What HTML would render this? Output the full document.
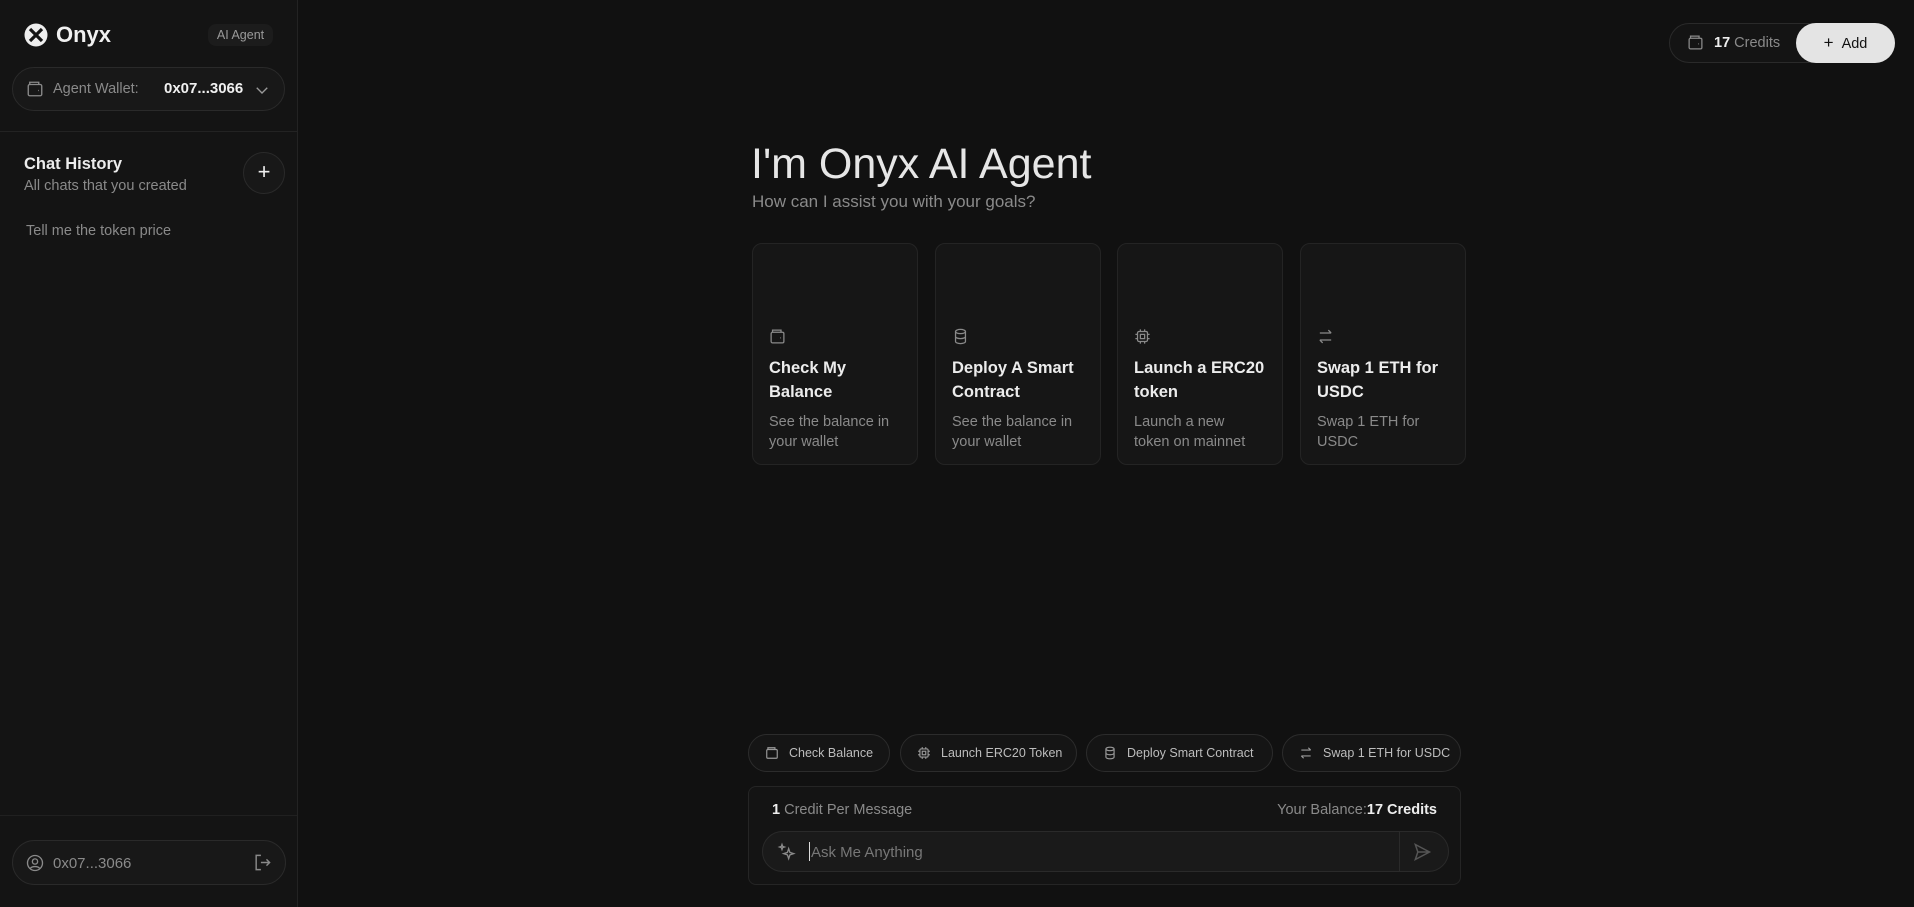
<!DOCTYPE html>
<html><head><meta charset="utf-8"><style>
*{box-sizing:border-box;margin:0;padding:0}
body{width:1914px;height:907px;background:#111111;font-family:"Liberation Sans",sans-serif;color:#e6e6e6;position:relative;overflow:hidden}
.abs{position:absolute}
.side{left:0;top:0;width:298px;height:907px;background:#141414;border-right:1px solid #232323}
.pill{border:1px solid #2a2a2a;border-radius:999px;background:#181818}
svg{display:block}
.card{position:absolute;top:243px;width:166px;height:222px;border:1px solid #242424;border-radius:10px;background:rgba(24,24,24,.85)}
.card svg{position:absolute;left:16px;top:84px}
.card .t{position:absolute;left:16px;top:112px;font-size:16.5px;font-weight:bold;line-height:24px;color:#ececec;width:140px}
.card .d{position:absolute;left:16px;top:168px;font-size:14.5px;line-height:20px;color:#8a8a8a;width:128px}
.chip{position:absolute;top:734px;height:38px;border:1px solid #2c2c2c;border-radius:999px;background:#151515;font-size:12.5px;color:#bdbdbd;display:flex;align-items:center;padding-left:16px;gap:10px;white-space:nowrap;overflow:hidden}
</style></head><body>
<div class="abs side">
  <svg class="abs" style="left:24px;top:23px" width="24" height="24" viewBox="0 0 24 24"><circle cx="12" cy="12" r="11.5" fill="#eee"/><path d="M6 6 L18 18 M18 6 L6 18" stroke="#141414" stroke-width="3.2"/></svg>
  <div class="abs" style="left:56px;top:22px;font-size:22px;font-weight:bold;color:#f0f0f0">Onyx</div>
  <div class="abs" style="left:208px;top:24px;width:65px;height:22px;border-radius:8px;background:#1c1c1c;font-size:12.5px;color:#9a9a9a;text-align:center;line-height:22px">AI Agent</div>
  <div class="abs pill" style="left:12px;top:67px;width:273px;height:44px"></div>
  <svg class="abs" style="left:26px;top:80px" width="18" height="18" viewBox="0 0 24 24" fill="none" stroke="#8a8a8a" stroke-width="1.8"><rect x="3" y="6" width="18" height="15" rx="2"/><path d="M5 6 L5 3 H17 V6 M16 14h1"/></svg>
  <div class="abs" style="left:53px;top:81px;font-size:14.5px;color:#8a8a8a">Agent Wallet:</div>
  <div class="abs" style="left:164px;top:80px;font-size:15px;font-weight:bold;color:#f0f0f0">0x07...3066</div>
  <svg class="abs" style="left:253px;top:81px" width="18" height="18" viewBox="0 0 24 24" fill="none" stroke="#9a9a9a" stroke-width="1.8"><path d="M5 9l7 7 7-7"/></svg>
  <div class="abs" style="left:0;top:131px;width:297px;height:1px;background:#232323"></div>
  <div class="abs" style="left:24px;top:155px;font-size:16.5px;font-weight:bold;color:#ececec">Chat History</div>
  <div class="abs" style="left:24px;top:178px;font-size:14.5px;color:#8a8a8a">All chats that you created</div>
  <div class="abs" style="left:243px;top:152px;width:42px;height:42px;border-radius:50%;border:1px solid #2a2a2a;background:#181818"></div>
  <div class="abs" style="left:243px;top:152px;width:42px;height:42px;text-align:center;line-height:40px;font-size:22px;color:#eee">+</div>
  <div class="abs" style="left:26px;top:223px;font-size:14.5px;color:#8a8a8a">Tell me the token price</div>
  <div class="abs" style="left:0;top:815px;width:297px;height:1px;background:#202020"></div>
  <div class="abs pill" style="left:12px;top:840px;width:274px;height:45px"></div>
  <svg class="abs" style="left:26px;top:854px" width="18" height="18" viewBox="0 0 24 24" fill="none" stroke="#8a8a8a" stroke-width="1.8"><circle cx="12" cy="12" r="10"/><circle cx="12" cy="10" r="3.5"/><path d="M6 19c2-3 10-3 12 0"/></svg>
  <div class="abs" style="left:53px;top:855px;font-size:15px;color:#8a8a8a">0x07...3066</div>
  <svg class="abs" style="left:253px;top:853px" width="19" height="19" viewBox="0 0 24 24" fill="none" stroke="#8a8a8a" stroke-width="1.8"><path d="M10 3H4v18h6M10 12h11M17 8l4 4-4 4"/></svg>
</div>

<div class="abs pill" style="left:1669px;top:23px;width:226px;height:40px;background:#141414"></div>
<svg class="abs" style="left:1687px;top:34px" width="17" height="17" viewBox="0 0 24 24" fill="none" stroke="#8a8a8a" stroke-width="1.8"><rect x="3" y="6" width="18" height="15" rx="2"/><path d="M5 6 L5 3 H17 V6 M16 14h1"/></svg>
<div class="abs" style="left:1714px;top:35px;font-size:14.5px;color:#8a8a8a"><b style="color:#eee">17</b> Credits</div>
<div class="abs" style="left:1796px;top:23px;width:99px;height:40px;border-radius:999px;background:#e4e4e4;color:#111;font-size:14.5px;line-height:40px;text-align:center"><span style="font-size:17px;margin-right:8px">+</span>Add</div>

<div class="abs" style="left:751px;top:140px;font-size:43px;color:#e6e6e6">I'm Onyx AI Agent</div>
<div class="abs" style="left:752px;top:192px;font-size:17px;color:#8a8a8a">How can I assist you with your goals?</div>

<div class="card" style="left:752px"><svg width="17" height="17" viewBox="0 0 24 24" fill="none" stroke="#8a8a8a" stroke-width="1.8"><rect x="3" y="6" width="18" height="15" rx="2"/><path d="M5 6 L5 3 H17 V6 M16 14h1"/></svg><div class="t">Check My Balance</div><div class="d">See the balance in your wallet</div></div>
<div class="card" style="left:935px"><svg width="17" height="17" viewBox="0 0 24 24" fill="none" stroke="#8a8a8a" stroke-width="1.8"><ellipse cx="12" cy="5" rx="7" ry="3"/><path d="M5 5v14c0 1.7 3 3 7 3s7-1.3 7-3V5M5 12c0 1.7 3 3 7 3s7-1.3 7-3"/></svg><div class="t">Deploy A Smart Contract</div><div class="d">See the balance in your wallet</div></div>
<div class="card" style="left:1117px"><svg width="17" height="17" viewBox="0 0 24 24" fill="none" stroke="#8a8a8a" stroke-width="1.8"><rect x="5" y="5" width="14" height="14" rx="2"/><rect x="9" y="9" width="6" height="6"/><path d="M9 2v3M15 2v3M9 19v3M15 19v3M2 9h3M2 15h3M19 9h3M19 15h3"/></svg><div class="t">Launch a ERC20 token</div><div class="d">Launch a new token on mainnet</div></div>
<div class="card" style="left:1300px"><svg width="17" height="17" viewBox="0 0 24 24" fill="none" stroke="#8a8a8a" stroke-width="1.8"><path d="M20 7H4M16 3l4 4M4 17h16M8 21l-4-4"/></svg><div class="t">Swap 1 ETH for USDC</div><div class="d">Swap 1 ETH for USDC</div></div>

<div class="chip" style="left:748px;width:142px"><svg width="14" height="14" viewBox="0 0 24 24" fill="none" stroke="#999" stroke-width="2"><rect x="3" y="6" width="18" height="15" rx="2"/><path d="M5 6 L5 3 H17 V6"/></svg>Check Balance</div>
<div class="chip" style="left:900px;width:177px"><svg width="14" height="14" viewBox="0 0 24 24" fill="none" stroke="#999" stroke-width="2"><rect x="5" y="5" width="14" height="14" rx="2"/><rect x="9" y="9" width="6" height="6"/><path d="M9 2v3M15 2v3M9 19v3M15 19v3M2 9h3M2 15h3M19 9h3M19 15h3"/></svg>Launch ERC20 Token</div>
<div class="chip" style="left:1086px;width:187px"><svg width="14" height="14" viewBox="0 0 24 24" fill="none" stroke="#999" stroke-width="2"><ellipse cx="12" cy="5" rx="7" ry="3"/><path d="M5 5v14c0 1.7 3 3 7 3s7-1.3 7-3V5M5 12c0 1.7 3 3 7 3s7-1.3 7-3"/></svg>Deploy Smart Contract</div>
<div class="chip" style="left:1282px;width:179px"><svg width="14" height="14" viewBox="0 0 24 24" fill="none" stroke="#999" stroke-width="2"><path d="M20 7H4M16 3l4 4M4 17h16M8 21l-4-4"/></svg>Swap 1 ETH for USDC</div>

<div class="abs" style="left:748px;top:786px;width:713px;height:99px;border:1px solid #252525;border-radius:8px;background:#141414"></div>
<div class="abs" style="left:772px;top:802px;font-size:14.5px;color:#8a8a8a"><b style="color:#eee">1</b> Credit Per Message</div>
<div class="abs" style="left:1180px;top:802px;width:257px;text-align:right;font-size:14.5px;color:#8a8a8a;white-space:nowrap">Your Balance:<b style="color:#eee">17 Credits</b></div>
<div class="abs" style="left:762px;top:831px;width:687px;height:41px;border:1px solid #2a2a2a;border-radius:999px;background:#1a1a1a"></div>
<div class="abs" style="left:1399px;top:832px;width:1px;height:39px;background:#2a2a2a"></div>
<svg class="abs" style="left:777px;top:842px" width="20" height="20" viewBox="0 0 24 24" fill="none" stroke="#8a8a8a" stroke-width="1.6"><path d="M14 8l1.5 4.5L20 14l-4.5 1.5L14 20l-1.5-4.5L8 14l4.5-1.5z M6 3l.8 2.2L9 6l-2.2.8L6 9l-.8-2.2L3 6l2.2-.8z"/></svg>
<div class="abs" style="left:809px;top:842px;width:1px;height:19px;background:#ddd"></div>
<div class="abs" style="left:811px;top:844px;font-size:15px;color:#777">Ask Me Anything</div>
<svg class="abs" style="left:1412px;top:842px" width="20" height="20" viewBox="0 0 24 24" fill="none" stroke="#555" stroke-width="1.8"><path d="M4 3l17 9-17 9 3-9z M7 12h14"/></svg>
</body></html>
